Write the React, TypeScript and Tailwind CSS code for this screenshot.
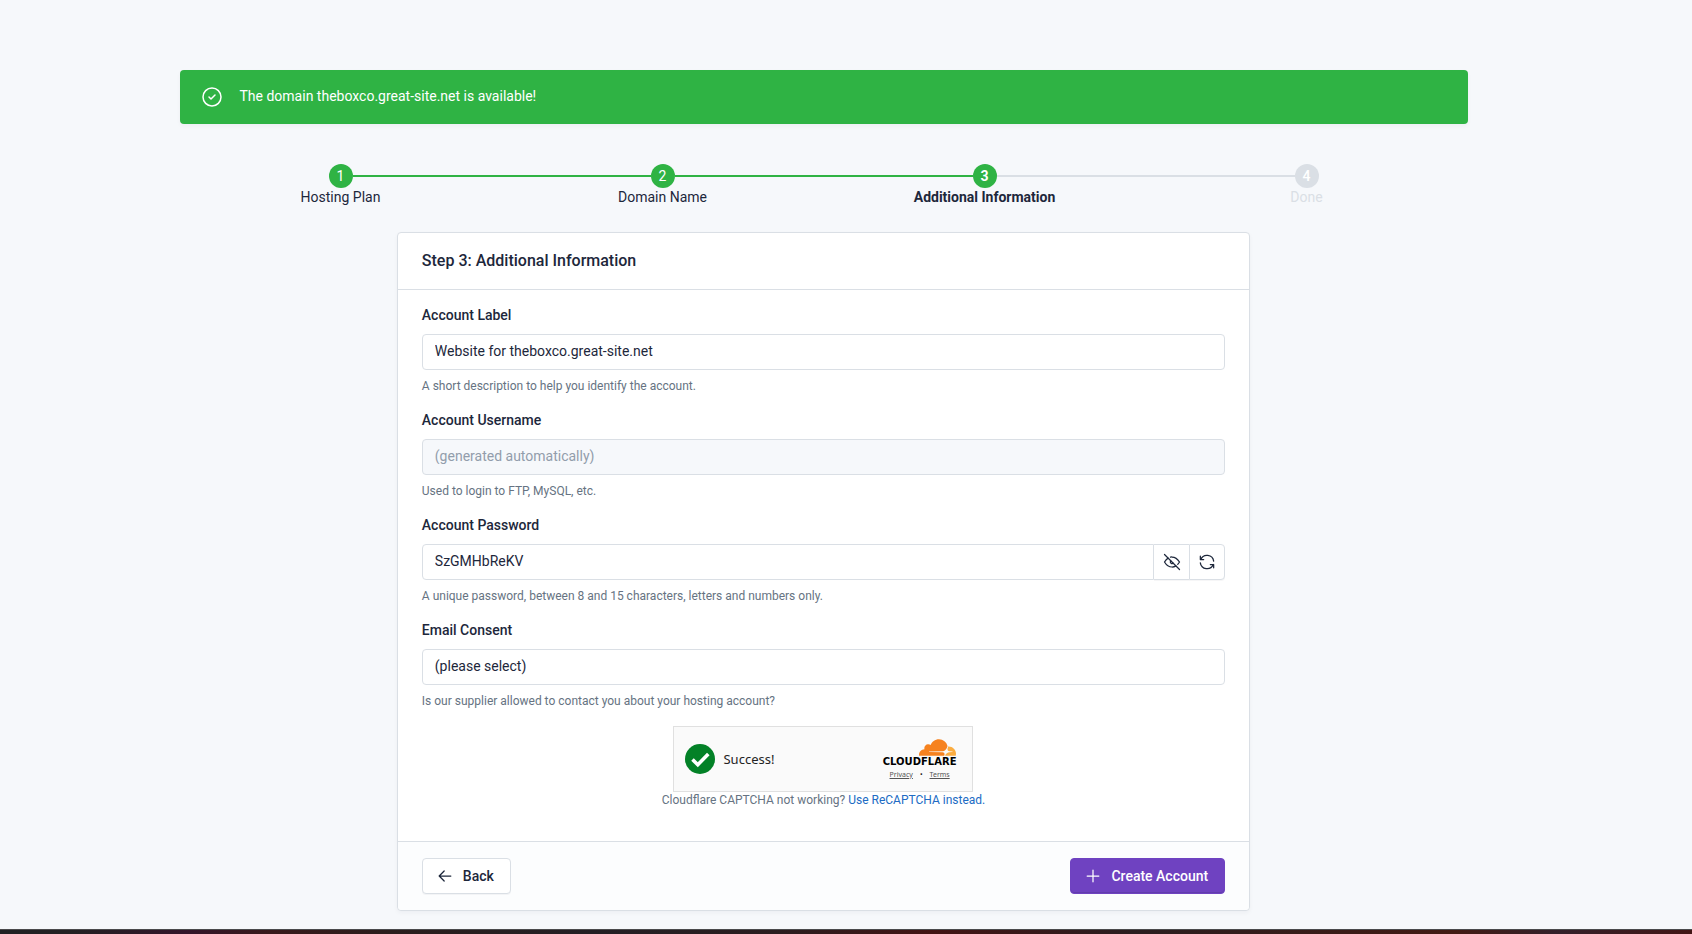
import type { ReactNode } from "react";

function Icon({ size = "size-5", children }: { size?: string; children: ReactNode }) {
  return (
    <svg
      viewBox="0 0 24 24"
      className={`${size} shrink-0`}
      fill="none"
      stroke="currentColor"
      strokeWidth="1.5"
      strokeLinecap="round"
      strokeLinejoin="round"
      aria-hidden="true"
    >
      {children}
    </svg>
  );
}

type StepState = "done" | "active" | "pending";

const steps: { label: string; state: StepState }[] = [
  { label: "Hosting Plan", state: "done" },
  { label: "Domain Name", state: "done" },
  { label: "Additional Information", state: "active" },
  { label: "Done", state: "pending" },
];

const labelStyles: Record<StepState, string> = {
  done: "text-[#1d273b]",
  active: "font-bold text-[#1d273b]",
  pending: "text-[#dadfe5]",
};

const dotStyles: Record<StepState, string> = {
  done: "bg-[#2fb344]",
  active: "bg-[#2fb344] font-bold",
  pending: "bg-[#dadfe5] font-medium",
};

function Steps() {
  return (
    <ol className="flex">
      {steps.map((step, i) => {
        const pending = step.state === "pending";
        const next = steps[i + 1];
        const before = i === 0 ? "bg-transparent" : pending ? "bg-[#dadfe5]" : "bg-[#2fb344]";
        const after = !next ? "bg-transparent" : next.state === "pending" ? "bg-[#dadfe5]" : "bg-[#2fb344]";
        return (
          <li key={step.label} className={`flex flex-1 flex-col items-center ${labelStyles[step.state]}`}>
            <div className="flex w-full items-center">
              <span className={`h-0.5 flex-1 ${before}`} />
              <span className={`flex size-6 items-center justify-center rounded-full text-white ${dotStyles[step.state]}`}>
                {i + 1}
              </span>
              <span className={`h-0.5 flex-1 ${after}`} />
            </div>
            <span className="leading-[18px]">{step.label}</span>
          </li>
        );
      })}
    </ol>
  );
}

function Field({ id, label, hint, children }: { id: string; label: string; hint: string; children: ReactNode }) {
  return (
    <div className="mb-4">
      <label htmlFor={id} className="mb-2.5 block leading-[18px] font-medium">
        {label}
      </label>
      {children}
      <p className="mt-2 text-[12px] leading-[17px] text-[#667382]">{hint}</p>
    </div>
  );
}

const control =
  "block h-9 w-full min-w-0 appearance-none border border-[#dadfe5] bg-white px-3 pb-0.5 text-[14px] leading-5 text-[#1d273b] outline-none";

function CloudflareLogo() {
  return (
    <div className="flex flex-col items-end">
      <svg viewBox="0 6.5 24 11" className="h-[17px] w-[37px]" aria-hidden="true">
        <path
          fill="#f6821f"
          d="M16.5088 16.8447c.1475-.5068.0908-.9707-.1553-1.3154-.2246-.3164-.6045-.499-1.0615-.5205l-8.6592-.1123a.1559.1559 0 0 1-.1333-.0713c-.0283-.042-.0351-.0986-.021-.1553.0278-.084.1123-.1484.2036-.1562l8.7359-.1123c1.0351-.0489 2.1601-.8868 2.5537-1.9136l.499-1.3013c.0215-.0561.0293-.1128.0147-.168-.5625-2.5463-2.835-4.4453-5.5499-4.4453-2.5039 0-4.6284 1.6177-5.3876 3.8614-.4927-.3658-1.1187-.5625-1.794-.499-1.2026.119-2.1665 1.083-2.2861 2.2856-.0283.31-.0069.6128.0635.894C1.5683 13.171 0 14.7754 0 16.752c0 .1748.0142.3515.0352.5273.0141.083.0844.1475.1689.1475h15.9814c.0909 0 .1758-.0645.2032-.1553l.12-.4268z"
        />
        <path
          fill="#fbad41"
          d="M19.2656 11.2813c-.0771 0-.1611 0-.2383.0112-.0566 0-.1054.0415-.127.0976l-.3378 1.1744c-.1475.5068-.0918.9707.1543 1.3164.2256.3164.6055.498 1.0625.5195l1.8437.1133c.0557 0 .1055.0263.1329.0703.0283.043.0351.1074.0214.1562-.0283.084-.1132.1485-.204.1553l-1.921.1123c-1.041.0488-2.1582.8867-2.5527 1.914l-.1406.3585c-.0283.0713.0215.1416.0986.1416h6.5977c.0771 0 .1474-.0489.169-.126.1122-.4082.1757-.837.1757-1.2803 0-2.6025-2.125-4.727-4.7344-4.727"
        />
      </svg>
      <span className="font-['DejaVu_Sans',sans-serif] text-[10px] leading-3 font-bold text-black">CLOUDFLARE</span>
    </div>
  );
}

function Captcha() {
  return (
    <div className="flex h-[66px] w-[300px] items-center border border-[#e0e0e0] bg-[#fafafa] pr-4 pl-[11px] font-['Noto_Sans',sans-serif] text-[#232323]">
      <svg viewBox="0 0 30 30" className="mr-2 size-[30px]" aria-hidden="true">
        <circle cx="15" cy="15" r="15" fill="#038127" />
        <path d="M7.5 15.5l5.3 5.2L23.3 10" fill="none" stroke="#fff" strokeWidth="3.6" />
      </svg>
      <span className="text-[13px] leading-5">Success!</span>
      <div className="ml-auto flex flex-col items-center">
        <CloudflareLogo />
        <div className="mt-0.5 flex items-center gap-[7px] text-[7px] leading-[10px] text-[#555]">
          <a href="#privacy" className="underline underline-offset-1">Privacy</a>
          <span className="text-[#232323]">•</span>
          <a href="#terms" className="underline underline-offset-1">Terms</a>
        </div>
      </div>
    </div>
  );
}

export default function App() {
  return (
    <div className="min-h-screen bg-[#f6f8fb] font-[Roboto,sans-serif] text-[14px] leading-5 text-[#1d273b]">
      <div className="pt-[70px] pr-[45px]">
        <main className="mx-auto max-w-[1320px] px-2">
          <div className="px-2">
            <div
              role="alert"
              className="flex items-start gap-4 rounded bg-[#2fb344] px-5 py-[15px] text-white shadow-[0_2px_4px_rgba(24,36,51,0.04)]"
            >
              <Icon size="size-6">
                <circle cx="12" cy="12" r="9" />
                <path d="M9 12l2 2l4 -4" />
              </Icon>
              <p className="leading-[22px]">The domain theboxco.great-site.net is available!</p>
            </div>
            <nav aria-label="Progress" className="mt-10">
              <Steps />
            </nav>
          </div>

          <div className="mx-auto mt-[26px] w-2/3 px-2">
            <form
              className="rounded border border-[#dadfe5] bg-white shadow-[0_2px_4px_rgba(24,36,51,0.04)]"
              onSubmit={(e) => e.preventDefault()}
            >
              <header className="border-b border-[#dadfe5] px-6 py-4">
                <h1 className="text-[16px] leading-6 font-medium">Step 3: Additional Information</h1>
              </header>

              <div className="px-6 py-4">
                <Field id="label" label="Account Label" hint="A short description to help you identify the account.">
                  <input id="label" type="text" defaultValue="Website for theboxco.great-site.net" className={`${control} rounded`} />
                </Field>
                <Field id="username" label="Account Username" hint="Used to login to FTP, MySQL, etc.">
                  <input
                    id="username"
                    type="text"
                    disabled
                    placeholder="(generated automatically)"
                    className="block h-9 w-full rounded border border-[#dadfe5] bg-[#f6f8fb] px-3 pb-0.5 text-[14px] leading-5 placeholder:text-[#929dab]"
                  />
                </Field>
                <Field
                  id="password"
                  label="Account Password"
                  hint="A unique password, between 8 and 15 characters, letters and numbers only."
                >
                  <div className="flex">
                    <input id="password" type="text" defaultValue="SzGMHbReKV" className={`${control} rounded-l`} />
                    <button
                      type="button"
                      aria-label="Hide password"
                      className="flex h-9 w-[35px] shrink-0 items-center justify-center border-y border-[#dadfe5] bg-white shadow-[0_1px_0_rgba(24,36,51,0.04)]"
                    >
                      <Icon>
                        <path d="M10.585 10.587a2 2 0 0 0 2.829 2.828" />
                        <path d="M16.681 16.673a8.717 8.717 0 0 1 -4.681 1.327c-3.6 0 -6.6 -2 -9 -6c1.272 -2.12 2.712 -3.678 4.32 -4.674m2.86 -1.146a9.055 9.055 0 0 1 1.82 -.18c3.6 0 6.6 2 9 6c-.666 1.11 -1.379 2.067 -2.138 2.87" />
                        <path d="M3 3l18 18" />
                      </Icon>
                    </button>
                    <button
                      type="button"
                      aria-label="Generate password"
                      className="flex h-9 w-9 shrink-0 items-center justify-center rounded-r border border-[#dadfe5] bg-white shadow-[0_1px_0_rgba(24,36,51,0.04)]"
                    >
                      <Icon>
                        <path d="M20 11a8.1 8.1 0 0 0 -15.5 -2m-.5 -4v4h4" />
                        <path d="M4 13a8.1 8.1 0 0 0 15.5 2m.5 4v-4h-4" />
                      </Icon>
                    </button>
                  </div>
                </Field>
                <Field id="consent" label="Email Consent" hint="Is our supplier allowed to contact you about your hosting account?">
                  <select id="consent" className={`${control} rounded`}>
                    <option>(please select)</option>
                  </select>
                </Field>

                <div className="mb-4 flex flex-col items-center">
                  <Captcha />
                  <p className="text-[12px] leading-[17px] text-[#667382]">
                    Cloudflare CAPTCHA not working?{" "}
                    <a href="#recaptcha" className="text-[#206bc4]">
                      Use ReCAPTCHA instead.
                    </a>
                  </p>
                </div>
              </div>

              <footer className="flex items-center justify-between rounded-b border-t border-[#dadfe5] bg-[#fcfdfe] px-6 py-4">
                <button
                  type="button"
                  className="flex h-9 items-center gap-2 rounded border border-[#dadfe5] bg-white pr-4 pl-3 font-medium shadow-[0_1px_0_rgba(24,36,51,0.04)]"
                >
                  <Icon>
                    <path d="M5 12h14M5 12l6 6M5 12l6 -6" />
                  </Icon>
                  Back
                </button>
                <button
                  type="submit"
                  className="flex h-9 items-center gap-2 rounded border border-[#6f42c1] bg-[#6f42c1] pr-4 pl-3 font-medium text-white shadow-[inset_0_-1px_0_rgba(24,36,51,0.15)]"
                >
                  <Icon>
                    <path d="M12 5v14M5 12h14" />
                  </Icon>
                  Create Account
                </button>
              </footer>
            </form>
          </div>
        </main>
      </div>
      <div className="mt-[18px] h-[5px] border-t border-[#4a4a4c] bg-[linear-gradient(to_right,#202022_0%,#222022_4%,#33152a_11%,#38191b_16%,#2a1d1c_23%,#231f24_35%,#2a1d1f_46%,#421313_55%,#2a1d1f_67%,#421a13_86%,#33202a_92%,#421515_100%)]" />
    </div>
  );
}
